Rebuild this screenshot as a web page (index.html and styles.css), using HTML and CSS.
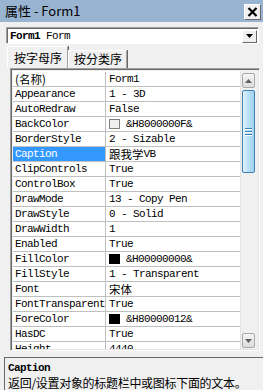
FILE: index.html
```html
<!DOCTYPE html>
<html lang="zh">
<head>
  <meta charset="UTF-8" />
  <title>属性 - Form1</title>
  <link rel="stylesheet" href="styles.css">
</head>
<body>
  <div class="window">
    <!-- Title bar -->
    <div class="titlebar">
      <span class="title">属性 - Form1</span>
      <span class="close">
        <svg width="11" height="10" viewBox="0 0 11 10"><path d="M1.5 1 L9.5 9 M9.5 1 L1.5 9" stroke="#000" stroke-width="2.2"/></svg>
      </span>
    </div>

    <!-- Object combo -->
    <div class="combo">
      <span class="combo-text"><b>Form1</b> Form</span>
      <span class="combo-btn">
        <svg width="7" height="4" viewBox="0 0 7 4"><path d="M0 0 H7 L3.5 4 Z" fill="#000"/></svg>
      </span>
    </div>

    <!-- Tabs -->
    <div class="tabs">
      <div class="tab active">按字母序</div>
      <div class="tab">按分类序</div>
    </div>

    <!-- Property grid -->
    <div class="grid">
      <div class="rows">
        <div class="row"><div class="name cjk">(名称)</div><div class="value">Form1</div></div>
        <div class="row"><div class="name">Appearance</div><div class="value">1 - 3D</div></div>
        <div class="row"><div class="name">AutoRedraw</div><div class="value">False</div></div>
        <div class="row"><div class="name">BackColor</div><div class="value"><span class="swatch white"></span>&amp;H8000000F&amp;</div></div>
        <div class="row"><div class="name">BorderStyle</div><div class="value">2 - Sizable</div></div>
        <div class="row selected"><div class="name">Caption</div><div class="value"><span class="cjk">跟我学</span>VB</div></div>
        <div class="row"><div class="name">ClipControls</div><div class="value">True</div></div>
        <div class="row"><div class="name">ControlBox</div><div class="value">True</div></div>
        <div class="row"><div class="name">DrawMode</div><div class="value">13 - Copy Pen</div></div>
        <div class="row"><div class="name">DrawStyle</div><div class="value">0 - Solid</div></div>
        <div class="row"><div class="name">DrawWidth</div><div class="value">1</div></div>
        <div class="row"><div class="name">Enabled</div><div class="value">True</div></div>
        <div class="row"><div class="name">FillColor</div><div class="value"><span class="swatch black"></span>&amp;H00000000&amp;</div></div>
        <div class="row"><div class="name">FillStyle</div><div class="value">1 - Transparent</div></div>
        <div class="row"><div class="name">Font</div><div class="value cjk">宋体</div></div>
        <div class="row"><div class="name">FontTransparent</div><div class="value">True</div></div>
        <div class="row"><div class="name">ForeColor</div><div class="value"><span class="swatch black"></span>&amp;H80000012&amp;</div></div>
        <div class="row"><div class="name">HasDC</div><div class="value">True</div></div>
        <div class="row"><div class="name">Height</div><div class="value">4440</div></div>
      </div>

      <div class="scrollbar">
        <div class="sb-btn">
          <svg width="7" height="4" viewBox="0 0 7 4"><path d="M0 4 H7 L3.5 0 Z" fill="#606060"/></svg>
        </div>
        <div class="sb-track">
          <div class="sb-thumb">
            <span class="grip"></span><span class="grip"></span><span class="grip"></span>
          </div>
        </div>
        <div class="sb-btn">
          <svg width="7" height="4" viewBox="0 0 7 4"><path d="M0 0 H7 L3.5 4 Z" fill="#606060"/></svg>
        </div>
      </div>
    </div>

    <!-- Description -->
    <div class="desc">
      <div class="desc-title">Caption</div>
      <div class="desc-text">返回/设置对象的标题栏中或图标下面的文本。</div>
    </div>
  </div>
</body>
</html>
```

FILE: styles.css
```css
/* Reset & Body */
* {
  margin: 0;
  padding: 0;
  box-sizing: border-box;
}
body {
  background: #f0f0f0;
  font-family: "Noto Sans CJK SC", sans-serif;
  color: #000;
  overflow: hidden;
}

.window {
  width: 263px;
  height: 390px;
  display: flex;
  flex-direction: column;
}

/* Title bar */
.titlebar {
  height: 22px;
  background: #99b4d1;
  display: flex;
  align-items: center;
  justify-content: space-between;
  padding: 0 2px 0 5px;
}
.title {
  font-size: 13px;
  line-height: 16px;
}
.close {
  width: 17px;
  height: 16px;
  margin-top: 1px;
  background: #f0f0f0;
  border: 1px solid;
  border-color: #fff #696969 #696969 #fff;
  display: flex;
  align-items: center;
  justify-content: center;
}

/* Object combo */
.combo {
  height: 17px;
  margin: 5px 4px 0 6px;
  background: #fff;
  border: 1px solid;
  border-color: #a0a0a0 #fff #fff #a0a0a0;
  box-shadow: inset 1px 1px 0 #696969;
  display: flex;
  align-items: center;
  justify-content: space-between;
  padding: 1px 1px 0 3px;
}
.combo-text {
  font-family: "Liberation Mono", monospace;
  font-size: 11px;
  letter-spacing: -0.6px;
  line-height: 13px;
}
.combo-btn {
  width: 15px;
  height: 13px;
  background: #f0f0f0;
  border: 1px solid;
  border-color: #fff #696969 #696969 #fff;
  display: flex;
  align-items: center;
  justify-content: center;
}

/* Tabs */
.tabs {
  display: flex;
  align-items: flex-end;
  height: 22px;
  margin-top: 2px;
  padding-left: 7px;
}
.tab {
  font-size: 12px;
  line-height: 14px;
  padding: 1px 4px 2px 5px;
  height: 18px;
  border: 1px solid #a0a0a0;
  border-bottom: none;
  border-left-color: #fff;
  border-top-color: #fff;
  box-shadow: 1px 0 0 #696969;
}
.tab.active {
  height: 22px;
  padding: 4px 5px 2px 6px;
}

/* Property grid */
.grid {
  height: 283px;
  margin: 0 3px 0 10px;
  display: flex;
  border: 1px solid;
  border-color: #a0a0a0 #fff #fff #a0a0a0;
  box-shadow: inset 1px 1px 0 #696969, inset -1px -1px 0 #e3e3e3;
  padding: 2px 2px 1px 2px;
}
.rows {
  flex: 1;
  overflow: hidden;
  background: #fff;
  font-family: "Liberation Mono", monospace;
  font-size: 11px;
  letter-spacing: -0.6px;
  padding-top: 1px;
}
.row {
  display: flex;
  height: 15px;
  line-height: 14px;
  border-bottom: 1px solid #c0c0c0;
  white-space: nowrap;
}
.name {
  width: 93px;
  flex-shrink: 0;
  padding-left: 2px;
  border-right: 1px solid #c0c0c0;
}
.value {
  flex: 1;
  padding-left: 3px;
  display: flex;
  align-items: center;
}
.row.selected .name {
  background: #3399ff;
  color: #fff;
}
.cjk {
  font-family: "Noto Sans CJK SC", sans-serif;
  font-size: 11.5px;
  line-height: 14px;
  letter-spacing: 0;
}
.swatch {
  width: 11px;
  height: 10px;
  margin-right: 6px;
  border: 1px solid #000;
}
.swatch.white {
  background: #f0f0f0;
  border-color: #808080;
}
.swatch.black {
  background: #000;
}

/* Scrollbar */
.scrollbar {
  width: 17px;
  flex-shrink: 0;
  background: #f0f0f0;
  display: flex;
  flex-direction: column;
  padding: 2px 2px 1px 1px;
  border-left: 1px solid #e3e3e3;
}
.sb-btn {
  height: 15px;
  border: 1px solid #a8a8a8;
  border-radius: 2px;
  background: linear-gradient(#f5f5f5, #dcdcdc);
  display: flex;
  align-items: center;
  justify-content: center;
}
.sb-track {
  flex: 1;
  padding: 2px 0;
}
.sb-thumb {
  height: 83px;
  border: 1px solid #3c7fb1;
  border-radius: 2px;
  background: linear-gradient(90deg, #e3f4fc, #b7dff7 50%, #a4d2ef);
  display: flex;
  flex-direction: column;
  align-items: center;
  justify-content: center;
  gap: 1px;
}
.grip {
  width: 7px;
  height: 2px;
  border-top: 1px solid #3c7fb1;
  border-bottom: 1px solid #fff;
}

/* Description */
.desc {
  flex: 1;
  margin: 6px 0 0 4px;
  border-top: 1px solid #696969;
  border-left: 1px solid #696969;
  padding: 4px 0 0 3px;
}
.desc-title {
  font-family: "Liberation Mono", monospace;
  font-weight: bold;
  font-size: 11px;
  letter-spacing: -0.6px;
  line-height: 13px;
}
.desc-text {
  font-size: 12px;
  line-height: 15px;
  letter-spacing: -0.3px;
  white-space: nowrap;
}
```
